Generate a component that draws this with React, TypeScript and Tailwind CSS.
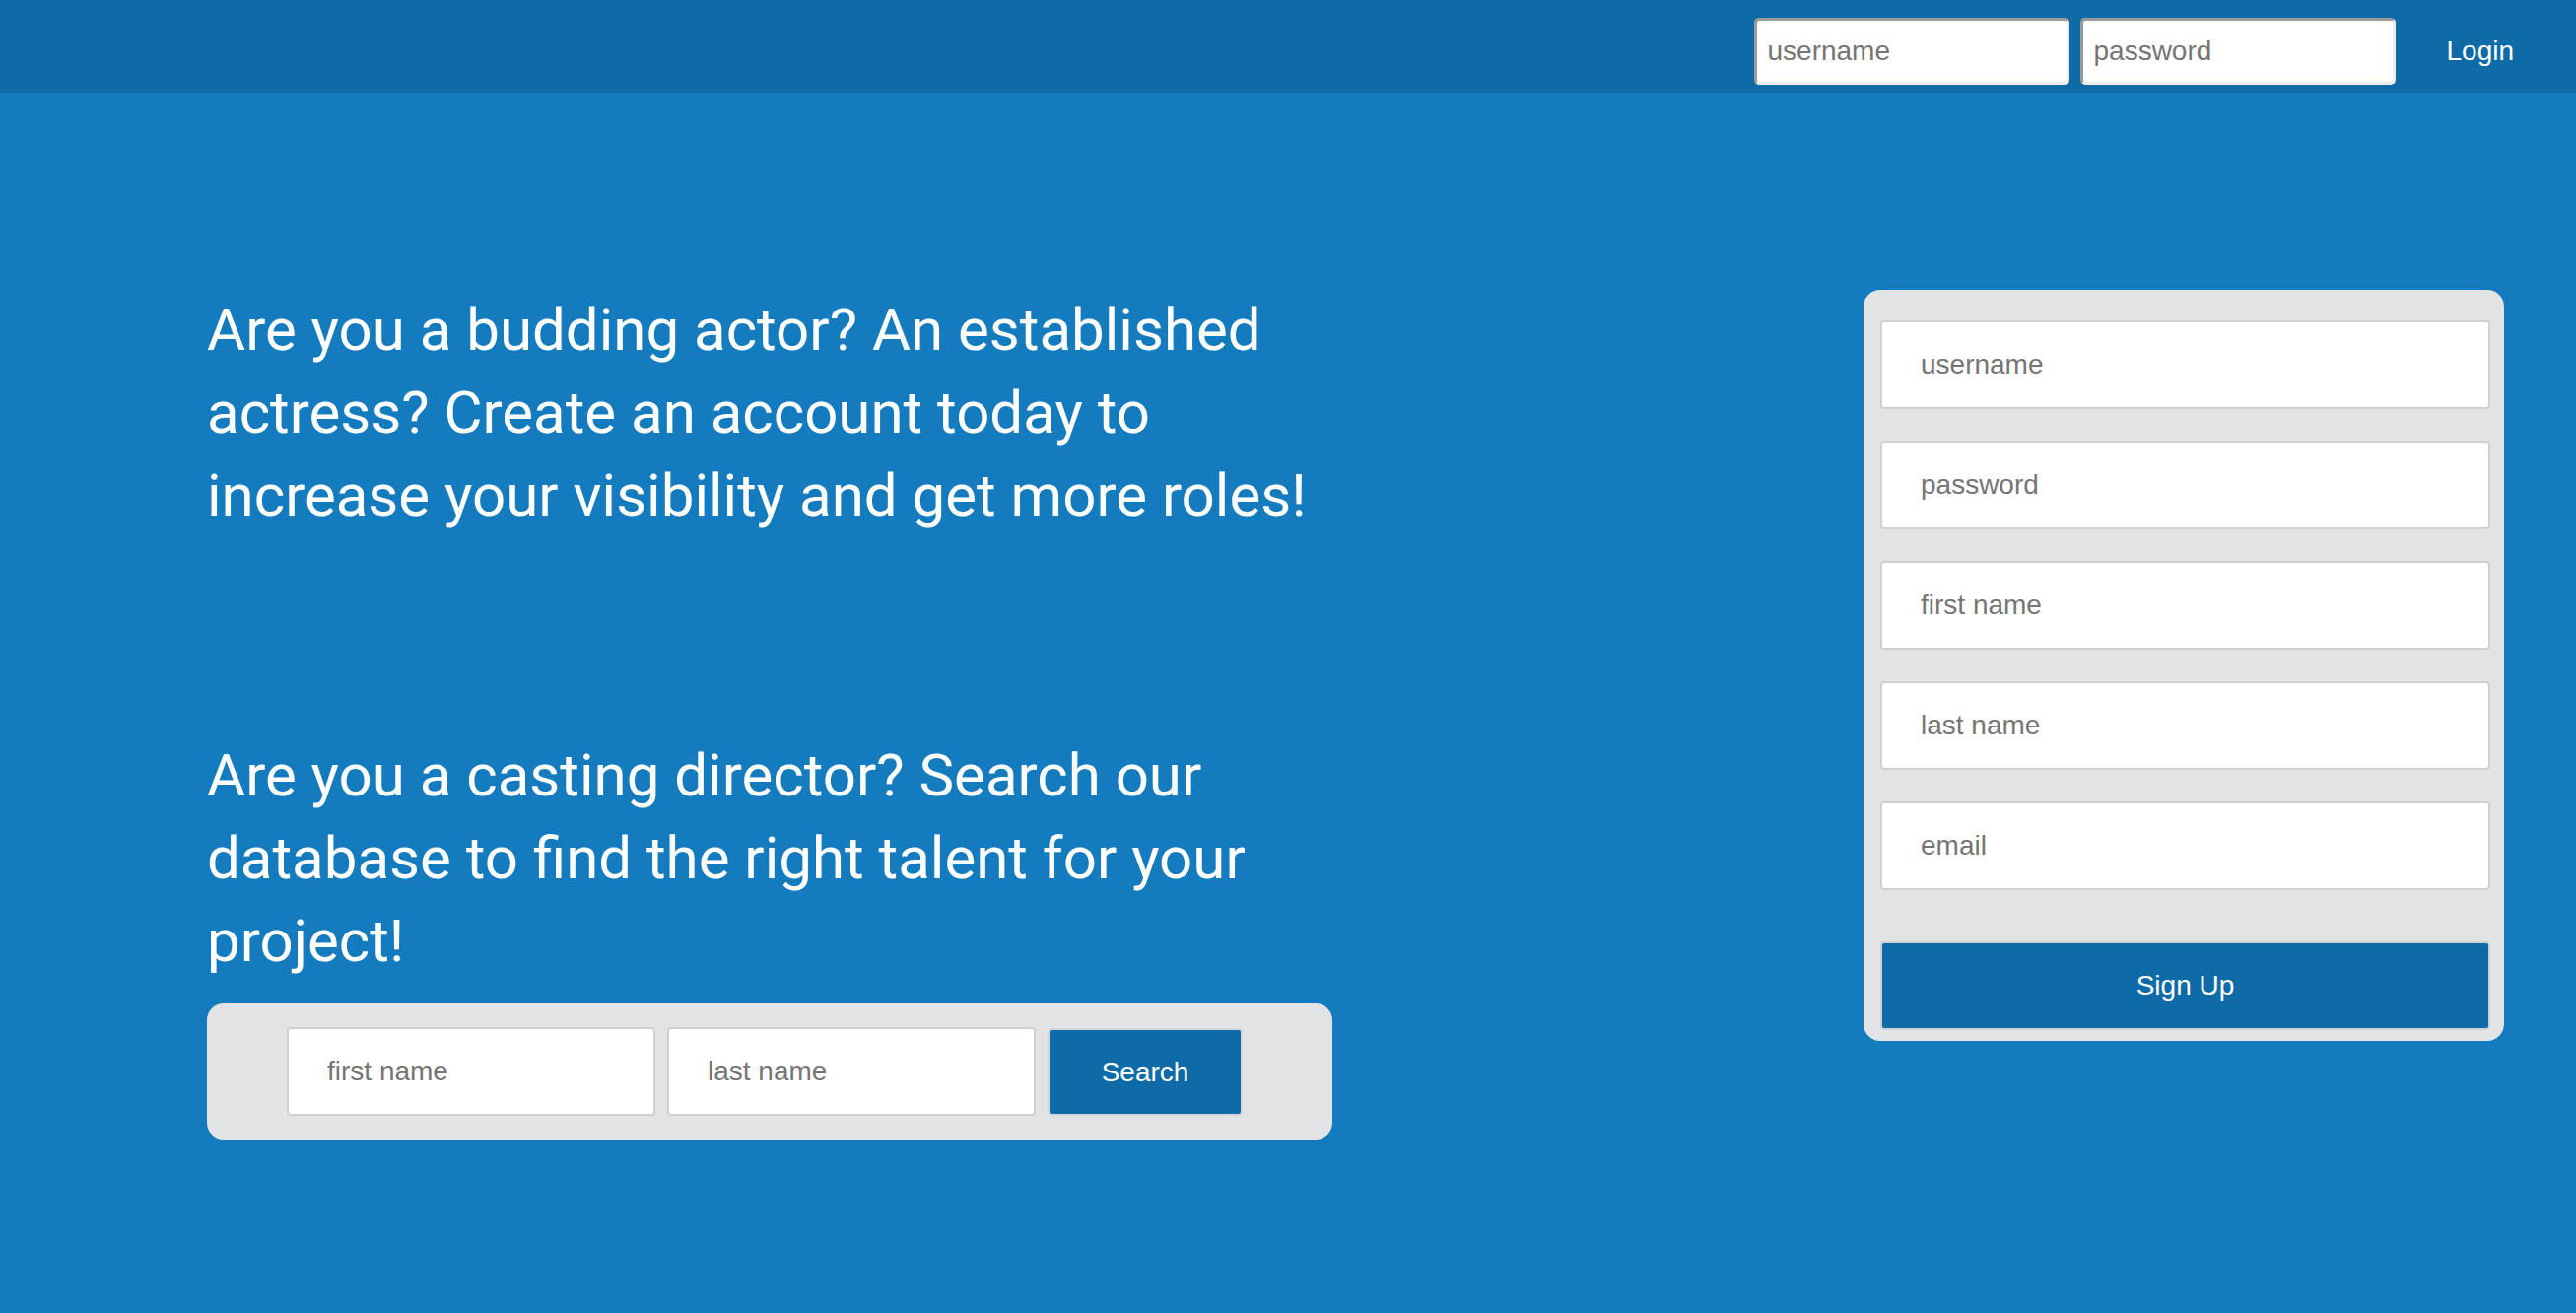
import React from "react";

const sans = "font-['Liberation_Sans',Arial,sans-serif]";

function NavInput({ placeholder, type = "text" }: { placeholder: string; type?: string }) {
  return (
    <input
      type={type}
      placeholder={placeholder}
      className={`${sans} h-[68px] w-[320px] rounded-[5px] border-[3px] border-t-[#9b9b9b] border-l-[#9b9b9b] border-b-[#ececec] border-r-[#ececec] bg-white px-[10px] text-[28px] text-black outline-none placeholder:text-[#757575]`}
    />
  );
}

function FormInput({ placeholder, className = "", type = "text" }: { placeholder: string; className?: string; type?: string }) {
  return (
    <input
      type={type}
      placeholder={placeholder}
      className={`${sans} h-[90px] rounded-[4px] border-2 border-[#cfd0d2] bg-white pl-[39px] text-[28px] text-black outline-none placeholder:text-[#757575] ${className}`}
    />
  );
}

export default function App() {
  return (
    <div className="min-h-screen bg-[#157bbf]">
      <nav className="flex h-[94px] items-start justify-end bg-[#0f6ba7] pt-[18px] pr-[63px]">
        <div className="flex gap-[11px]">
          <NavInput placeholder="username" />
          <NavInput placeholder="password" type="password" />
        </div>
        <button
          type="button"
          className={`${sans} ml-[51px] h-[68px] text-[28px] text-white`}
        >
          Login
        </button>
      </nav>

      <main className="flex items-start pt-[199px]">
        <section className="ml-[210px] w-[1142px] font-['Roboto',sans-serif] text-white">
          <p className="text-[60px] leading-[84px]">
            Are you a budding actor? An established actress? Create an account today to increase your visibility and get more roles!
          </p>

          <p className="mt-[200px] text-[60px] leading-[84px]">
            Are you a casting director? Search our database to find the right talent for your project!
          </p>

          <form className="mt-[21px] flex gap-[12px] rounded-[17px] bg-[#e2e3e5] py-[24px] pl-[81px]">
            <FormInput placeholder="first name" className="w-[374px]" />
            <FormInput placeholder="last name" className="w-[374px]" />
            <button
              type="button"
              className={`${sans} mt-[1px] h-[89px] w-[198px] rounded-[4px] border-2 border-[#d3d5d8] bg-[#0f6ba7] text-[28px] text-white`}
            >
              Search
            </button>
          </form>
        </section>

        <form className="ml-auto mr-[73px] mt-[1px] flex w-[650px] flex-col rounded-[17px] bg-[#e2e3e5] pl-[17px] pr-[14px] pt-[31px] pb-[11px]">
          <div className="flex flex-col gap-[32px]">
            <FormInput placeholder="username" />
            <FormInput placeholder="password" type="password" />
            <FormInput placeholder="first name" />
            <FormInput placeholder="last name" />
            <FormInput placeholder="email" />
          </div>
          <button
            type="button"
            className={`${sans} mt-[52px] h-[90px] rounded-[4px] border-2 border-[#cfd0d2] bg-[#0f6ba7] text-[28px] text-white`}
          >
            Sign Up
          </button>
        </form>
      </main>
    </div>
  );
}
